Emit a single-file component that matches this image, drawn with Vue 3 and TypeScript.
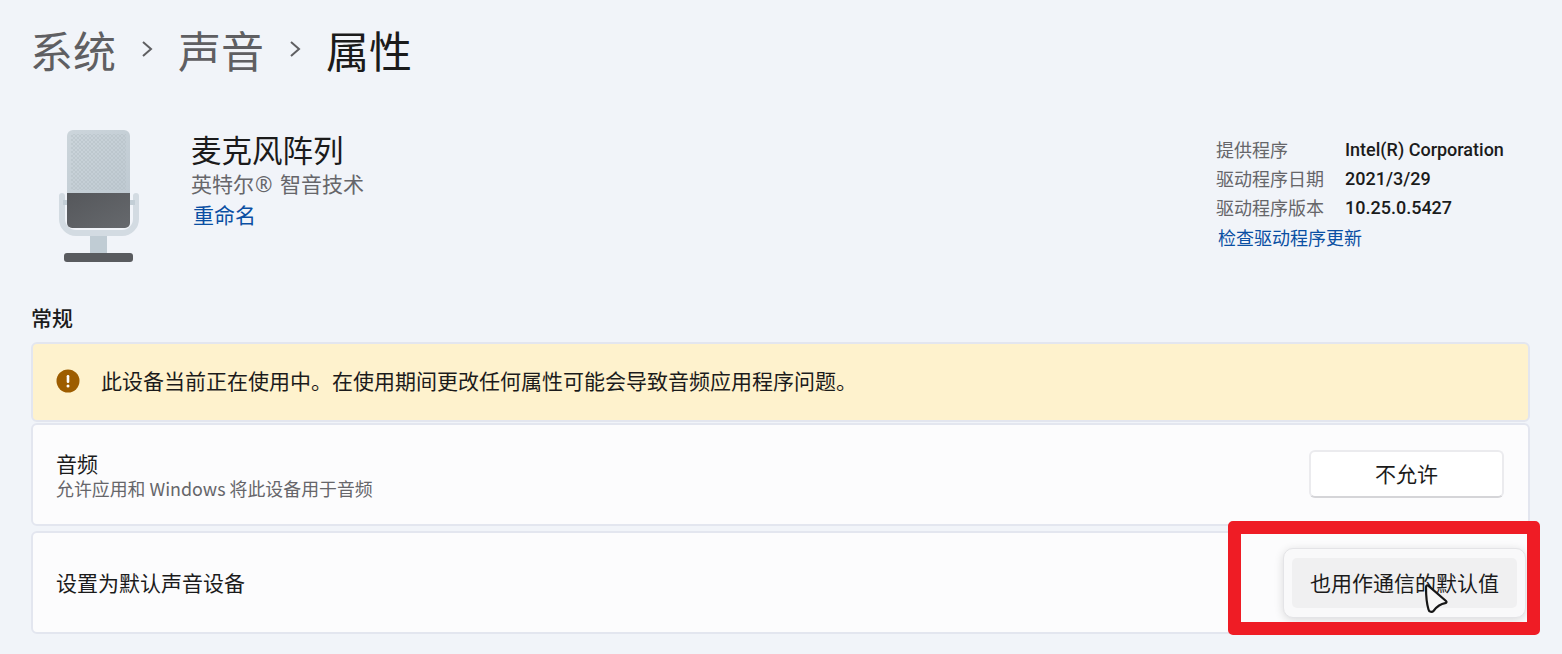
<script setup lang="ts">
const drivers = [
  { label: '提供程序', value: 'Intel(R) Corporation' },
  { label: '驱动程序日期', value: '2021/3/29' },
  { label: '驱动程序版本', value: '10.25.0.5427' },
]
</script>

<template>
  <main class="page">
    <nav class="crumbs">
      <span class="crumb">系统</span>
      <svg class="sep" width="12" height="18" viewBox="0 0 12 18"><path d="M2 2l8 7-8 7" fill="none" stroke="#5f5f62" stroke-width="2" /></svg>
      <span class="crumb">声音</span>
      <svg class="sep" width="12" height="18" viewBox="0 0 12 18"><path d="M2 2l8 7-8 7" fill="none" stroke="#5f5f62" stroke-width="2" /></svg>
      <span class="crumb current">属性</span>
    </nav>

    <section class="device">
      <svg class="mic" width="84" height="134" viewBox="0 0 84 134">
        <defs>
          <pattern id="dots" width="4" height="4" patternUnits="userSpaceOnUse">
            <circle cx="1" cy="1" r="0.700" fill="#aab5bc" />
            <circle cx="3" cy="3" r="0.700" fill="#aab5bc" />
          </pattern>
          <linearGradient id="head" x1="0" y1="0" x2="1" y2="1">
            <stop offset="0" stop-color="#ccd5db" />
            <stop offset="1" stop-color="#bfcad2" />
          </linearGradient>
          <linearGradient id="body" x1="0" y1="0" x2="1" y2="1">
            <stop offset="0" stop-color="#55575b" />
            <stop offset="1" stop-color="#66696d" />
          </linearGradient>
        </defs>
        <rect x="33" y="106" width="17" height="19" fill="#c0ccd4" />
        <path d="M5 67v23a14 14 0 0 0 14 14h46a14 14 0 0 0 14-14V67" fill="none" stroke="#d3dbe2" stroke-width="6" stroke-linecap="round" />
        <rect x="6" y="71" width="72" height="5" fill="#c3ced6" />
        <path d="M10 64V7a6 6 0 0 1 6-6h51a6 6 0 0 1 6 6v57z" fill="url(#head)" />
        <rect x="14" y="5" width="55" height="56" fill="url(#dots)" />
        <path d="M10 64h63v30a5 5 0 0 1-5 5H15a5 5 0 0 1-5-5z" fill="url(#body)" />
        <rect x="7" y="124" width="69" height="9" rx="3" fill="#595b5f" />
      </svg>
      <div class="device-text">
        <div class="device-name">麦克风阵列</div>
        <div class="device-sub">英特尔<span class="reg">® </span>智音技术</div>
        <a class="link rename">重命名</a>
      </div>
      <div class="driver">
        <div class="driver-grid">
          <template v-for="d in drivers" :key="d.label">
            <span class="driver-label">{{ d.label }}</span>
            <span class="driver-value">{{ d.value }}</span>
          </template>
        </div>
        <a class="link update">检查驱动程序更新</a>
      </div>
    </section>

    <h2 class="section-title">常规</h2>

    <div class="card warning">
      <svg class="warn-icon" width="24" height="24" viewBox="0 0 24 24">
        <circle cx="12" cy="12" r="11.500" fill="#9d5d00" />
        <rect x="10.700" y="6" width="2.600" height="8" rx="1.200" fill="#fff" />
        <circle cx="12" cy="17" r="1.500" fill="#fff" />
      </svg>
      <span class="warn-text">此设备当前正在使用中。在使用期间更改任何属性可能会导致音频应用程序问题。</span>
    </div>

    <div class="card row audio">
      <div>
        <div class="row-title">音频</div>
        <div class="row-sub">允许应用和 Windows 将此设备用于音频</div>
      </div>
      <button class="btn">不允许</button>
    </div>

    <div class="card row default">
      <div class="row-title">设置为默认声音设备</div>
      <div class="menu">
        <div class="menu-item">也用作通信的默认值</div>
      </div>
    </div>

    <div class="highlight"></div>
    <svg class="cursor" width="28" height="32" viewBox="0 0 28 32">
      <path d="M3 4c0-1.500 1.500-2 2.500-1.200L23 18c1 1 .5 2-.8 2.200-4 .6-8 3-11.500 7.500-1.800 2-4.700 1.300-5.200-1.200C3.500 20 3 12 3 4z" fill="#f7f7f7" stroke="#161616" stroke-width="2.200" stroke-linejoin="round" />
    </svg>
  </main>
</template>

<style scoped>
.page {
  position: relative;
  width: 1562px;
  height: 654px;
  box-sizing: border-box;
  padding: 0 32px 0 31px;
  overflow: hidden;
  background: #f1f4f9;
  color: #1b1b1b;
  font-family: "Noto Sans CJK SC", "Noto Sans", sans-serif;
}
.crumbs {
  display: flex;
  align-items: center;
  height: 98px;
  margin: 0 0 4px -1px;
  gap: 25px;
}
.crumb {
  font-size: 43px;
  line-height: 50px;
  color: #5f5f62;
}
.crumb.current {
  color: #1b1b1b;
}
.device {
  display: flex;
  height: 171px;
  padding-top: 27px;
  box-sizing: border-box;
}
.mic {
  margin-left: 26px;
  flex: none;
}
.device-text {
  margin-left: 50px;
}
.device-name {
  font-size: 30.500px;
  line-height: 40px;
}
.device-sub {
  font-size: 21px;
  line-height: 28px;
  color: #66666a;
}
.reg {
  font-family: "Open Sans", sans-serif;
  margin: 0 2px 0 1px;
}
.link {
  display: block;
  color: #0a4fa3;
}
.rename {
  margin: 2px 0 0 2px;
  font-size: 21px;
  line-height: 28px;
}
.driver {
  margin-left: auto;
  margin-right: 22px;
  padding-top: 6px;
}
.driver-grid {
  display: grid;
  grid-template-columns: 129px 163px;
}
.driver-label,
.driver-value {
  line-height: 29px;
  font-size: 18px;
}
.driver-label {
  color: #66666a;
}
.driver-value {
  color: #1b1b1b;
  font-family: "Roboto", "Noto Sans CJK SC", sans-serif;
  font-size: 18px;
  font-weight: 500;
  white-space: nowrap;
}
.update {
  margin: 1px 0 0 2px;
  font-size: 18px;
  line-height: 29px;
}
.section-title {
  margin: 0;
  height: 69px;
  padding-top: 29px;
  box-sizing: border-box;
  font-size: 21px;
  line-height: 30px;
  font-weight: 500;
}
.card {
  box-sizing: border-box;
  border: 2px solid #e3e6ef;
  border-radius: 6px;
  background: #fcfcfd;
  display: flex;
  align-items: center;
  font-size: 21px;
}
.warning {
  height: 80px;
  margin-bottom: 1px;
  padding-left: 23px;
  background: #fef2cd;
}
.warn-icon {
  margin-right: 21px;
  margin-top: -3px;
}
.warn-text {
  margin-top: -5px;
}
.row {
  justify-content: space-between;
  padding: 0 24px 0 23px;
}
.audio {
  height: 103px;
  margin-bottom: 5px;
}
.default {
  height: 103px;
}
.row-title {
  line-height: 26px;
  font-size: 21px;
}
.default .row-title {
  margin-top: -2px;
}
.row-sub {
  font-size: 17.900px;
  line-height: 24px;
  color: #66666a;
}
.btn {
  width: 195px;
  height: 48px;
  margin-top: -2px;
  box-sizing: border-box;
  border: 2px solid #ebebee;
  border-bottom-color: #d5d5d8;
  border-radius: 6px;
  background: #fff;
  color: #1b1b1b;
  font: inherit;
  padding: 0 0 1px;
}
.menu {
  box-sizing: border-box;
  width: 243px;
  height: 70px;
  margin-right: -22px;
  padding: 9px 8px;
  border: 1px solid #e4e4e7;
  border-radius: 10px;
  background: #f9f9fa;
  box-shadow: 0 2px 10px rgba(0, 0, 0, 0.14);
}
.menu-item {
  height: 50px;
  border-radius: 5px;
  background: #f0f0f1;
  text-align: center;
  line-height: 48px;
  font-size: 21px;
  white-space: nowrap;
}
.highlight {
  position: absolute;
  left: 1228px;
  top: 521px;
  width: 312px;
  height: 114px;
  box-sizing: border-box;
  border: 13px solid #ef1c25;
  border-radius: 5px;
}
.cursor {
  position: absolute;
  left: 1423px;
  top: 583px;
}
</style>

<style>
html,
body {
  margin: 0;
  background: #f1f4f9;
}
</style>
